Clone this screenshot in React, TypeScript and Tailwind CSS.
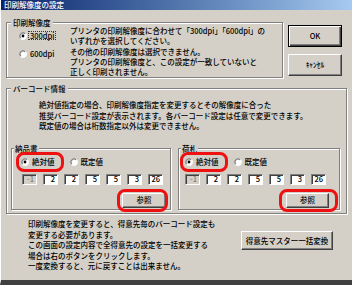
import React from 'react';

const values = ['-1', '2', '2', '5', '5', '3', '26'];

const etched = 'border border-[#808080] shadow-[inset_1px_1px_0_#fff,1px_1px_0_#fff]';

function Radio({ checked }: { checked?: boolean }) {
  return (
    <svg width="8" height="8" viewBox="0 0 12 12" className="shrink-0">
      <circle cx="6" cy="6" r="5.5" fill="#fff" />
      <path d="M2.11 9.89A5.5 5.5 0 0 1 9.89 2.11" fill="none" stroke="#808080" />
      <path d="M9.89 2.11A5.5 5.5 0 0 1 2.11 9.89" fill="none" stroke="#fff" />
      <path d="M2.82 9.18A4.5 4.5 0 0 1 9.18 2.82" fill="none" stroke="#404040" />
      {checked && <circle cx="6" cy="6" r="2.1" fill="#000" />}
    </svg>
  );
}

function Btn({
  children,
  className = '',
  isDefault,
}: {
  children: React.ReactNode;
  className?: string;
  isDefault?: boolean;
}) {
  const edge = isDefault
    ? 'border border-black shadow-[inset_1px_1px_0_#fff,inset_-1px_-1px_0_#404040,inset_-2px_-2px_0_#808080]'
    : 'border border-t-white border-l-white border-r-[#404040] border-b-[#404040] shadow-[inset_-1px_-1px_0_#808080]';
  return (
    <button className={`${edge} bg-[#d4d0c8] flex items-center justify-center leading-none ${className}`}>
      {children}
    </button>
  );
}

function Field({ v, disabled }: { v: string; disabled?: boolean }) {
  return (
    <div
      className={`w-[15px] h-[11px] border border-t-[#808080] border-l-[#808080] border-r-white border-b-white shadow-[inset_1px_1px_0_#404040] flex items-center justify-end pr-[2px] leading-none ${
        disabled ? 'bg-[#d4d0c8] text-[#808080]' : 'bg-white text-black'
      }`}
    >
      {v}
    </div>
  );
}

function SubGroup({
  title,
  width,
  pad,
  boxPad,
  btnPad,
  btnWidth,
  btnRing,
}: {
  title: string;
  width: string;
  pad: string;
  boxPad: string;
  btnPad: string;
  btnWidth: string;
  btnRing: string;
}) {
  return (
    <fieldset className={`${width} h-[67px] ${etched}`}>
      <legend className="ml-[2px] px-[1px] bg-[#d4d0c8] leading-[11px]">{title}</legend>
      <div className="flex flex-col">
        {/* 絶対値 / 既定値 */}
        <div className={`mt-[3px] h-[11px] flex items-center gap-[15px] ${pad}`}>
          <div className="relative h-[11px] flex items-center gap-[3px]">
            <Radio checked />
            <span className="leading-none">絶対値</span>
            <span className="absolute -left-[5px] -right-[9px] -top-[5px] -bottom-[4px] border-[3px] border-[#ee1111] rounded-[8px]" />
          </div>
          <div className="h-[11px] flex items-center gap-[3px]">
            <Radio />
            <span className="leading-none">既定値</span>
          </div>
        </div>

        <div className={`mt-[6px] flex gap-[6px] ${boxPad}`}>
          {values.map((v, i) => (
            <Field key={i} v={v} disabled={i === 0} />
          ))}
        </div>

        <div className={`mt-[8px] flex justify-end ${btnPad}`}>
          <div className="relative">
            <Btn className={`${btnWidth} h-[15px]`}>参照</Btn>
            <span className={`absolute ${btnRing} -top-[4px] -bottom-[4px] border-[3px] border-[#ee1111] rounded-[8px]`} />
          </div>
        </div>
      </div>
    </fieldset>
  );
}

export default function App() {
  return (
    <div className="w-[352px] h-[285px] overflow-hidden bg-[#d4d0c8] border-l border-l-white border-b-[5px] border-b-[#404040] flex flex-col text-black text-[7.5px] font-medium font-['Noto_Sans_CJK_JP',sans-serif]">
      {/* title bar */}
      <div className="h-[10px] shrink-0 bg-linear-to-r from-[#0a246a] to-[#a6caf0] overflow-hidden pl-[3px]">
        <span className="block text-white leading-[10px]">印刷解像度の設定</span>
      </div>

      <div className="flex flex-col pl-[5px]">
        {/* 印刷解像度 + OK / Cancel */}
        <div className="mt-[7px] flex">
          <fieldset className={`w-[277px] h-[61px] ${etched}`}>
            <legend className="ml-[4px] px-[2px] bg-[#d4d0c8] leading-[11px]">印刷解像度</legend>
            <div className="-mt-[2px] flex">
              <div className="w-[63px] pl-[12px] pt-[4px] flex flex-col gap-[7px]">
                <div className="h-[11px] flex items-center">
                  <Radio checked />
                  <span className="ml-[1px] border border-dotted border-[#333] px-[1px] leading-[7px]">300dpi</span>
                </div>
                <div className="h-[11px] flex items-center">
                  <Radio />
                  <span className="ml-[1px] border border-transparent px-[1px] leading-[7px]">600dpi</span>
                </div>
              </div>
              <div className="leading-[10.25px] whitespace-nowrap">
                <div>プリンタの印刷解像度に合わせて「300dpi」「600dpi」の</div>
                <div>いずれかを選択してください。</div>
                <div>その他の印刷解像度は選択できません。</div>
                <div>プリンタの印刷解像度と、この設定が一致していないと</div>
                <div>正しく印刷されません。</div>
              </div>
            </div>
          </fieldset>

          <div className="ml-[5px] mt-[8px] flex flex-col gap-[7px]">
            <Btn isDefault className="w-[54px] h-[22px]">OK</Btn>
            <Btn className="w-[54px] h-[22px]">ｷｬﾝｾﾙ</Btn>
          </div>
        </div>

        {/* バーコード情報 */}
        <fieldset className={`mt-[5px] w-[341px] h-[131px] ${etched}`}>
          <legend className="ml-[4px] px-[2px] bg-[#d4d0c8] leading-[11px]">バーコード情報</legend>
          <div className="mt-[6px] pl-[32px] leading-[10.5px] whitespace-nowrap">
            <div>絶対値指定の場合、印刷解像度指定を変更するとその解像度に合った</div>
            <div>推奨バーコード設定が表示されます。各バーコード設定は任意で変更できます。</div>
            <div>既定値の場合は桁数指定以外は変更できません。</div>
          </div>
          <div className="mt-[11px] pl-[4px] flex gap-[7px]">
            <SubGroup
              title="納品書"
              width="w-[160px]"
              pad="pl-[9px]"
              boxPad="pl-[10px]"
              btnPad="pr-[4px]"
              btnWidth="w-[44px]"
              btnRing="-left-[5px] -right-[2px]"
            />
            <SubGroup
              title="荷札"
              width="w-[162px]"
              pad="pl-[6px]"
              boxPad="pl-[6px]"
              btnPad="pr-[10px]"
              btnWidth="w-[43px]"
              btnRing="-left-[7px] -right-[9px]"
            />
          </div>
        </fieldset>

        {/* 一括変換 */}
        <div className="mt-[5px] flex">
          <div className="w-[235px] pl-[22px] leading-[10.5px] whitespace-nowrap">
            <div>印刷解像度を変更すると、得意先毎のバーコード設定も</div>
            <div>変更する必要があります。</div>
            <div>この画面の設定内容で全得意先の設定を一括変更する</div>
            <div>場合は右のボタンをクリックします。</div>
            <div>一度変換すると、元に戻すことは出来ません。</div>
          </div>
          <Btn className="mt-[12px] w-[92px] h-[19px]">得意先マスター一括変換</Btn>
        </div>
      </div>
    </div>
  );
}
